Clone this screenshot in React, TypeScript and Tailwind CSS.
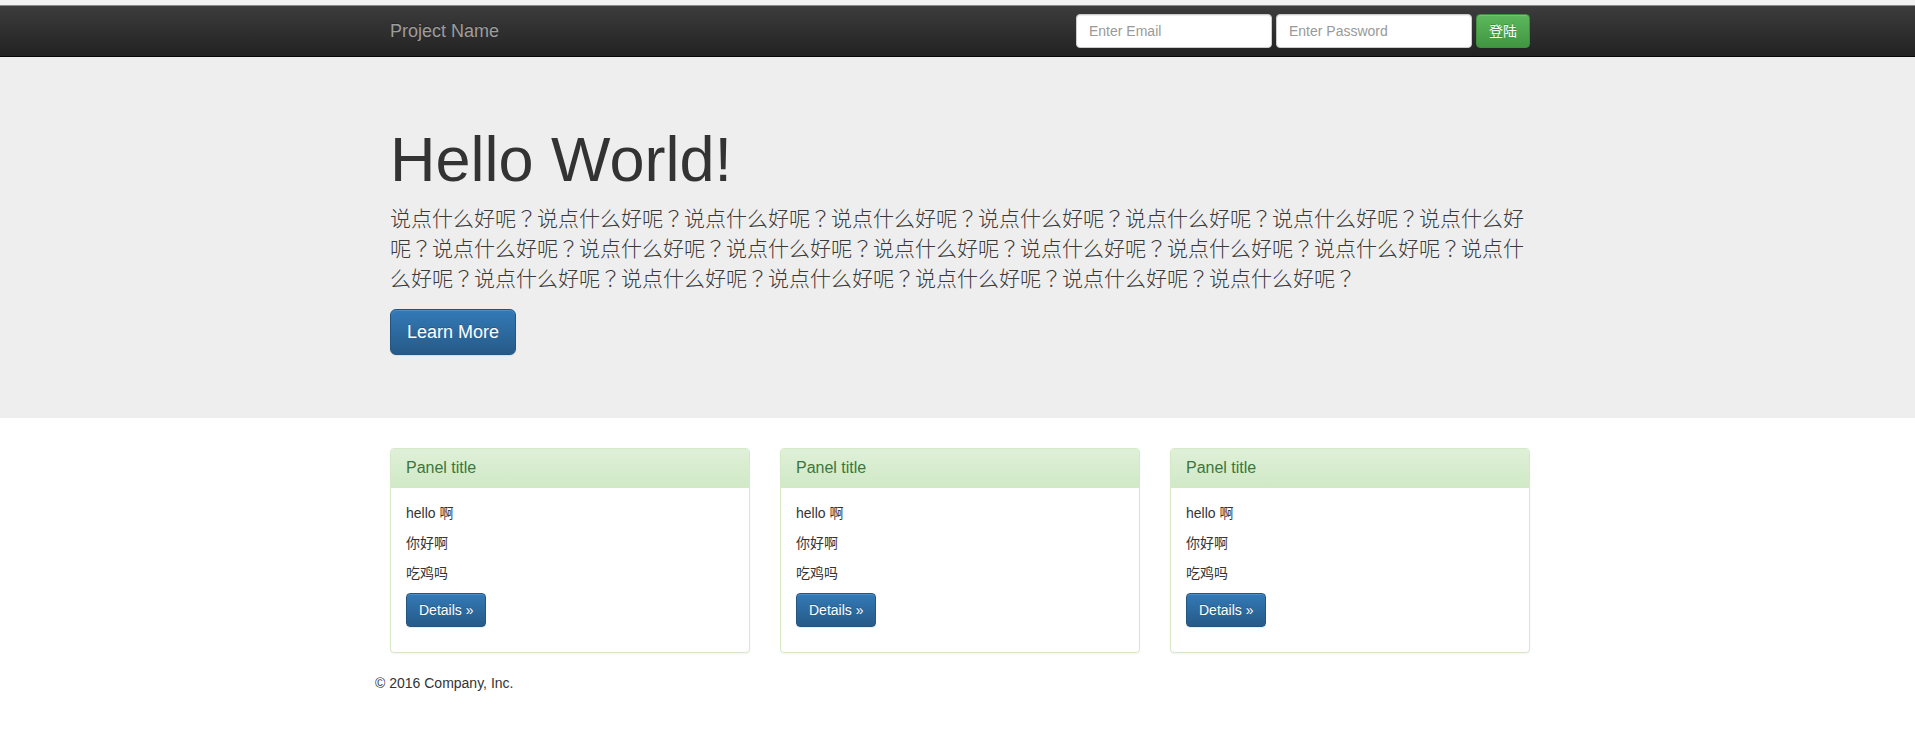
import React from "react";

const FONT = "font-['Liberation_Sans','Noto_Sans_CJK_SC',sans-serif]";

const heroText = Array.from({ length: 22 }, () => "说点什么好呢？").join("");

function Panel() {
  return (
    <div className="bg-white border border-[#d6e9c6] rounded-[4px] shadow-[0_1px_2px_rgba(0,0,0,0.05)] mb-[20px]">
      <div className="bg-[linear-gradient(to_bottom,#dff0d8_0%,#d0e9c6_100%)] border-b border-[#d6e9c6] rounded-t-[3px] px-[15px] py-[10px]">
        <h3 className="text-[16px] leading-[1.1] text-[#3c763d] m-0">Panel title</h3>
      </div>
      <div className="p-[15px] text-[14px] leading-[20px] text-[#333]">
        <p className="mb-[10px]">hello 啊</p>
        <p className="mb-[10px]">你好啊</p>
        <p className="mb-[10px]">吃鸡吗</p>
        <p className="mb-[10px]">
          <a className="inline-block px-[12px] py-[6px] text-[14px] leading-[20px] text-white rounded-[4px] border border-[#245580] bg-[linear-gradient(to_bottom,#337ab7_0%,#265a88_100%)] [text-shadow:0_-1px_0_rgba(0,0,0,0.2)] shadow-[inset_0_1px_0_rgba(255,255,255,0.15),0_1px_1px_rgba(0,0,0,0.075)] cursor-pointer">
            Details &raquo;
          </a>
        </p>
      </div>
    </div>
  );
}

export default function App() {
  return (
    <div className={`${FONT} text-[#333] text-[14px] leading-[20px] bg-white min-h-[731px]`}>
      <div className="h-[5px] bg-[#f1f1f1]" />
      <nav className="border-t border-t-[#8a8a8a] border-b border-b-[#080808] bg-[linear-gradient(to_bottom,#3c3c3c_0%,#222_100%)] pl-[5px]">
        <div className="w-[1170px] mx-auto px-[15px] h-[50px] flex items-center justify-between">
          <a className="-ml-[15px] px-[15px] py-[15px] text-[18px] leading-[20px] text-[#9d9d9d] [text-shadow:0_-1px_0_rgba(0,0,0,0.25)]">
            Project Name
          </a>
          <form className="flex items-center gap-[4px]" onSubmit={(e) => e.preventDefault()}>
            <input
              type="text"
              placeholder="Enter Email"
              className="w-[196px] h-[34px] px-[12px] py-[6px] text-[14px] leading-[20px] text-[#555] bg-white border border-[#ccc] rounded-[4px] shadow-[inset_0_1px_1px_rgba(0,0,0,0.075)] placeholder:text-[#999] outline-none"
            />
            <input
              type="password"
              placeholder="Enter Password"
              className="w-[196px] h-[34px] px-[12px] py-[6px] text-[14px] leading-[20px] text-[#555] bg-white border border-[#ccc] rounded-[4px] shadow-[inset_0_1px_1px_rgba(0,0,0,0.075)] placeholder:text-[#999] outline-none"
            />
            <button
              type="submit"
              className="h-[34px] px-[12px] text-[14px] leading-[20px] text-white rounded-[4px] border border-[#3e8f3e] bg-[linear-gradient(to_bottom,#5cb85c_0%,#419641_100%)] [text-shadow:0_-1px_0_rgba(0,0,0,0.2)] shadow-[inset_0_1px_0_rgba(255,255,255,0.15),0_1px_1px_rgba(0,0,0,0.075)]"
            >
              登陆
            </button>
          </form>
        </div>
      </nav>

      <div className="bg-[#eee] pt-[48px] pb-[48px] mb-[30px] pl-[5px]">
        <div className="w-[1170px] mx-auto px-[15px]">
          <h1 className="text-[63px] leading-[1.1] font-normal mt-[20px] mb-[10px] text-[#333]">Hello World!</h1>
          <p className="font-['Noto_Sans_CJK_TC','Noto_Sans_CJK_SC',sans-serif] text-[21px] leading-[30px] font-extralight -mt-[2px] mb-[17px] break-all text-[#3a3a3a]">
            {heroText}
          </p>
          <p className="mb-[15px]">
            <a className="inline-block px-[16px] py-[10px] text-[18px] leading-[24px] text-white rounded-[6px] border border-[#245580] bg-[linear-gradient(to_bottom,#337ab7_0%,#265a88_100%)] [text-shadow:0_-1px_0_rgba(0,0,0,0.2)] shadow-[inset_0_1px_0_rgba(255,255,255,0.15),0_1px_1px_rgba(0,0,0,0.075)] cursor-pointer">
              Learn More
            </a>
          </p>
        </div>
      </div>

      <div className="pl-[5px]">
        <div className="w-[1170px] mx-auto px-[15px]">
          <div className="grid grid-cols-3 gap-[30px]">
            <Panel />
            <Panel />
            <Panel />
          </div>
        </div>
        <footer className="w-[1170px] mx-auto">
          <p className="text-[14px] leading-[20px] mb-[10px]">&copy; 2016 Company, Inc.</p>
        </footer>
      </div>
    </div>
  );
}
